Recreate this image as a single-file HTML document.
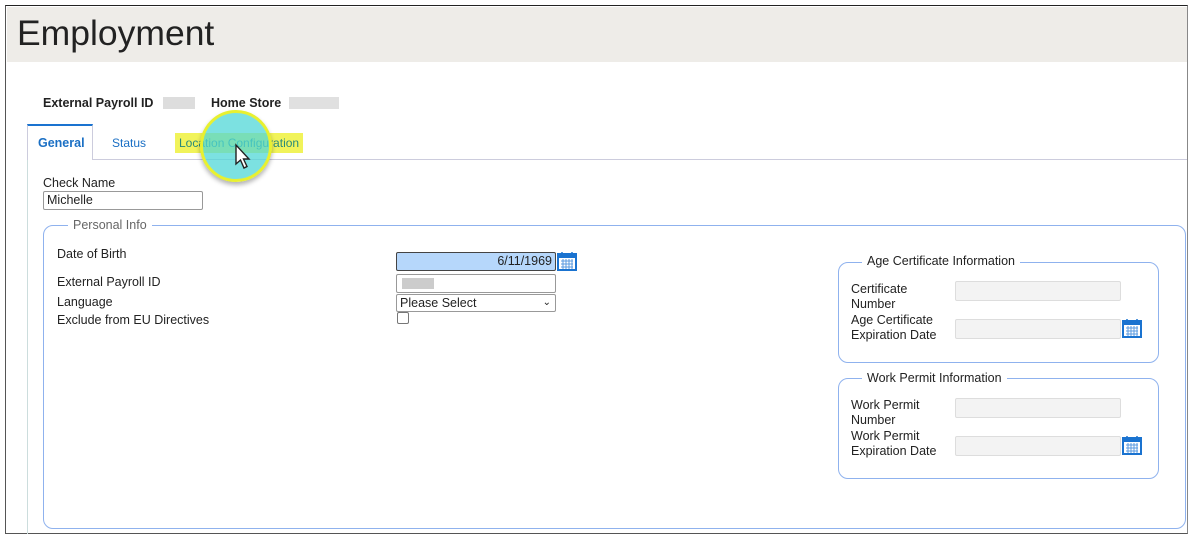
<!DOCTYPE html><html><head><style>
body{margin:0;width:1192px;height:537px;background:#fff;position:relative;overflow:hidden;font-family:"Liberation Sans",Arial,sans-serif;font-size:12.5px;color:#222}
.a{position:absolute}
.frame{left:5px;top:5px;width:1181px;height:527px;border-top:1.5px solid #222;border-left:1.5px solid #555;border-right:1.5px solid #888;border-bottom:1.5px solid #555}
.inp{position:absolute;border:1px solid #999;border-radius:2px;height:17px;background:#fff;box-sizing:border-box}
.dis{position:absolute;border:1px solid #ddd;background:#f3f3f3;border-radius:2px;box-sizing:border-box;height:20px}
.fs{position:absolute;border:1px solid #8fb2ee;border-radius:10px}
.leg{position:absolute;background:#fff;padding:0 5px;font-size:12.5px}
.cal{position:absolute;width:20px;height:20px}
</style></head><body>
<div class="a frame"></div>
<div class="a" style="left:7px;top:7px;width:1180px;height:55px;background:#eeece8"></div>
<div class="a" style="left:17px;top:13px;font-size:35.5px;color:#222">Employment</div>
<div class="a" style="left:43px;top:96px;font-weight:bold;font-size:12.5px">External Payroll ID</div>
<div class="a" style="left:163px;top:97px;width:32px;height:12px;background:#ddd"></div>
<div class="a" style="left:211px;top:96px;font-weight:bold">Home Store</div>
<div class="a" style="left:289px;top:97px;width:50px;height:12px;background:#e0e0e0"></div>
<div class="a" style="left:27px;top:159px;width:1160px;height:1px;background:#ccd"></div>
<div class="a" style="left:27px;top:159px;width:1px;height:375px;background:#cdd"></div>
<div class="a" style="left:27px;top:124px;width:66px;height:36px;background:#fff;border:1px solid #ccd;border-top:2px solid #1a73d0;border-bottom:none;box-sizing:border-box"></div>
<div class="a" style="left:38px;top:136px;color:#1a6fc4;font-weight:bold">General</div>
<div class="a" style="left:112px;top:136px;color:#1a6fc4;font-size:12px">Status</div>
<div class="a" style="left:175px;top:133px;width:128px;height:20px;background:#f1f35a"></div>
<div class="a" style="left:179px;top:136px;color:#2a8a7a;font-size:12px">Location Configuration</div>
<div class="a" style="left:200px;top:110px;width:66px;height:66px;border-radius:50%;background:rgba(80,215,215,.75);border:3px solid #e8f030;box-shadow:0 3px 5px rgba(0,0,0,.3)"></div>
<svg class="a" style="left:233px;top:143px" width="20" height="28" viewBox="0 0 20 28"><path d="M3 2 L3 21 L7.5 17 L11 25 L14 23.5 L10.5 16 L16 16 Z" fill="#fff" stroke="#222" stroke-width="1.4"/></svg>
<div class="a" style="left:43px;top:176px">Check Name</div>
<div class="inp" style="left:43px;top:191px;width:160px;height:19px;padding:1px 3px">Michelle</div>
<div class="fs" style="left:43px;top:225px;width:1141px;height:302px"></div>
<div class="leg" style="left:68px;top:218px;color:#666">Personal Info</div>
<div class="a" style="left:57px;top:247px">Date of Birth</div>
<div class="a" style="left:57px;top:275px">External Payroll ID</div>
<div class="a" style="left:57px;top:295px">Language</div>
<div class="a" style="left:57px;top:313px">Exclude from EU Directives</div>
<div class="inp" style="left:396px;top:252px;width:160px;height:19px;background:#b6d7fb;border-color:#444;text-align:right;padding:1px 3px">6/11/1969</div>
<svg class="cal" style="left:557px;top:251px" viewBox="0 0 20 20"><rect x="1" y="3" width="18" height="16" fill="#fff" stroke="#1a73d0" stroke-width="2"/><rect x="1" y="3" width="18" height="4" fill="#1a73d0"/><path d="M5 1v4M15 1v4" stroke="#1a73d0" stroke-width="1.5"/><path d="M4 10h12M4 13h12M4 16h12M6 8v10M9 8v10M12 8v10M15 8v10" stroke="#5b9be0" stroke-width="1"/></svg>
<div class="inp" style="left:396px;top:274px;width:160px;height:19px"><div style="margin:3px 5px;width:32px;height:11px;background:#ccc"></div></div>
<div class="inp" style="left:396px;top:294px;width:160px;height:18px;padding:0 3px;line-height:16px">Please Select<span style="position:absolute;right:4px;top:0;font-size:10px">&#8964;</span></div>
<div class="a" style="left:397px;top:312px;width:10px;height:10px;border:1px solid #777;border-radius:2px"></div>
<div class="fs" style="left:838px;top:262px;width:319px;height:99px"></div>
<div class="leg" style="left:862px;top:254px">Age Certificate Information</div>
<div class="a" style="left:851px;top:282px;line-height:15px">Certificate<br>Number</div>
<div class="a" style="left:851px;top:313px;line-height:15px">Age Certificate<br>Expiration Date</div>
<div class="dis" style="left:955px;top:281px;width:166px"></div>
<div class="dis" style="left:955px;top:319px;width:166px"></div>
<svg class="cal" style="left:1122px;top:318px" viewBox="0 0 20 20"><rect x="1" y="3" width="18" height="16" fill="#fff" stroke="#1a73d0" stroke-width="2"/><rect x="1" y="3" width="18" height="4" fill="#1a73d0"/><path d="M5 1v4M15 1v4" stroke="#1a73d0" stroke-width="1.5"/><path d="M4 10h12M4 13h12M4 16h12M6 8v10M9 8v10M12 8v10M15 8v10" stroke="#5b9be0" stroke-width="1"/></svg>
<div class="fs" style="left:838px;top:378px;width:319px;height:99px"></div>
<div class="leg" style="left:862px;top:371px">Work Permit Information</div>
<div class="a" style="left:851px;top:398px;line-height:15px">Work Permit<br>Number</div>
<div class="a" style="left:851px;top:429px;line-height:15px">Work Permit<br>Expiration Date</div>
<div class="dis" style="left:955px;top:398px;width:166px"></div>
<div class="dis" style="left:955px;top:436px;width:166px"></div>
<svg class="cal" style="left:1122px;top:435px" viewBox="0 0 20 20"><rect x="1" y="3" width="18" height="16" fill="#fff" stroke="#1a73d0" stroke-width="2"/><rect x="1" y="3" width="18" height="4" fill="#1a73d0"/><path d="M5 1v4M15 1v4" stroke="#1a73d0" stroke-width="1.5"/><path d="M4 10h12M4 13h12M4 16h12M6 8v10M9 8v10M12 8v10M15 8v10" stroke="#5b9be0" stroke-width="1"/></svg>
</body></html>
